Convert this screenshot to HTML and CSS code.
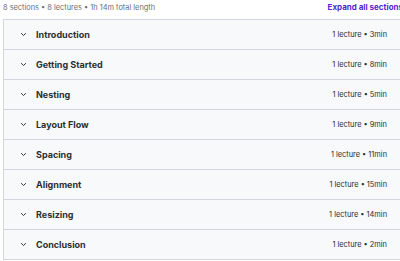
FILE: index.html
```html
<!DOCTYPE html>
<html>
<head>
<meta charset="utf-8">
<link rel="stylesheet" href="styles.css">
</head>
<body>
<div class="wrap">
  <div class="head">
    <span class="meta">8 sections • 8 lectures • 1h 14m total length</span>
    <span class="expand">Expand all sections</span>
  </div>
  <div class="list">
    <div class="row"><span class="chev"><svg width="7" height="5" viewBox="0 0 7 5"><path d="M1.2 1.2l2.3 2.3l2.3-2.3" fill="none" stroke="#2d2f31" stroke-width="1"/></svg></span><span class="title">Introduction</span><span class="info">1 lecture • 3min</span></div>
    <div class="row"><span class="chev"><svg width="7" height="5" viewBox="0 0 7 5"><path d="M1.2 1.2l2.3 2.3l2.3-2.3" fill="none" stroke="#2d2f31" stroke-width="1"/></svg></span><span class="title">Getting Started</span><span class="info">1 lecture • 8min</span></div>
    <div class="row"><span class="chev"><svg width="7" height="5" viewBox="0 0 7 5"><path d="M1.2 1.2l2.3 2.3l2.3-2.3" fill="none" stroke="#2d2f31" stroke-width="1"/></svg></span><span class="title">Nesting</span><span class="info">1 lecture • 5min</span></div>
    <div class="row"><span class="chev"><svg width="7" height="5" viewBox="0 0 7 5"><path d="M1.2 1.2l2.3 2.3l2.3-2.3" fill="none" stroke="#2d2f31" stroke-width="1"/></svg></span><span class="title">Layout Flow</span><span class="info">1 lecture • 9min</span></div>
    <div class="row"><span class="chev"><svg width="7" height="5" viewBox="0 0 7 5"><path d="M1.2 1.2l2.3 2.3l2.3-2.3" fill="none" stroke="#2d2f31" stroke-width="1"/></svg></span><span class="title">Spacing</span><span class="info">1 lecture • 11min</span></div>
    <div class="row"><span class="chev"><svg width="7" height="5" viewBox="0 0 7 5"><path d="M1.2 1.2l2.3 2.3l2.3-2.3" fill="none" stroke="#2d2f31" stroke-width="1"/></svg></span><span class="title">Alignment</span><span class="info">1 lecture • 15min</span></div>
    <div class="row"><span class="chev"><svg width="7" height="5" viewBox="0 0 7 5"><path d="M1.2 1.2l2.3 2.3l2.3-2.3" fill="none" stroke="#2d2f31" stroke-width="1"/></svg></span><span class="title">Resizing</span><span class="info">1 lecture • 14min</span></div>
    <div class="row"><span class="chev"><svg width="7" height="5" viewBox="0 0 7 5"><path d="M1.2 1.2l2.3 2.3l2.3-2.3" fill="none" stroke="#2d2f31" stroke-width="1"/></svg></span><span class="title">Conclusion</span><span class="info">1 lecture • 2min</span></div>
  </div>
</div>
</body>
</html>
```
FILE: styles.css
```css
html, body {
  margin: 0;
  padding: 0;
  background: #fff;
  overflow: hidden;
}
body {
  font-family: Inter, "Noto Sans", sans-serif;
  color: #2d2f31;
}
.wrap {
  width: 408px;
  padding-left: 3px;
}
.head {
  height: 14px;
  padding-bottom: 5px;
  display: flex;
  justify-content: space-between;
  align-items: center;
}
.meta {
  font-size: 7.4px;
  color: #6a6f73;
}
.expand {
  font-size: 8px;
  font-weight: 700;
  color: #5624d0;
  padding-right: 8px;
}
.list {
  border: 1px solid #d1d7dc;
}
.row {
  height: 29px;
  display: flex;
  align-items: center;
  background: #f7f9fa;
  border-bottom: 1px solid #d1d7dc;
  padding: 0 23px 0 16px;
}
.row:last-child {
  border-bottom: none;
}
.chev {
  width: 16px;
  display: flex;
  align-items: center;
}
.title {
  font-size: 9px;
  font-weight: 700;
  flex: 1;
}
.info {
  font-size: 7.4px;
  color: #2d2f31;
}
```
